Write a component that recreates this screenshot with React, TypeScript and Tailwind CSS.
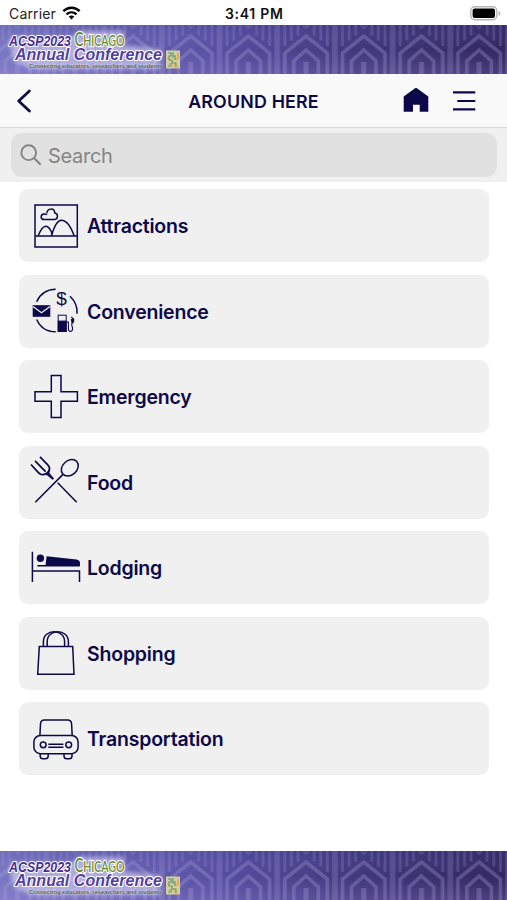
import React from 'react';

const NAVY = '#0c0849';

const Banner: React.FC<{ id: string }> = ({ id }) => (
    <svg className="block w-full h-[49px] shrink-0" viewBox="0 0 507 49" preserveAspectRatio="none">
        <defs>
            <linearGradient id={`${id}-base`}>
                <stop offset="0" stopColor="#7977c2" />
                <stop offset="0.3" stopColor="#625cae" />
                <stop offset="0.48" stopColor="#514a9a" />
                <stop offset="0.7" stopColor="#41387c" />
                <stop offset="1" stopColor="#32275f" />
            </linearGradient>
            <linearGradient id={`${id}-glow`} x1="0" y1="0" x2="0" y2="1">
                <stop offset="0" stopColor="#3c3a90" stopOpacity="0.18" />
                <stop offset="0.5" stopColor="#8f7fd0" stopOpacity="0" />
                <stop offset="1" stopColor="#b49be8" stopOpacity="0.2" />
            </linearGradient>
            <pattern id={`${id}-deco`} width="57.7" height="49" x="-11.3" patternUnits="userSpaceOnUse">
                <g fill="none" stroke="#a9a1dc" strokeOpacity="0.32" strokeWidth="3.6">
                    <path d="M7.6 49V28L28.85 11L50.1 28V49" />
                    <path d="M16.6 49V36L28.85 25L41.1 36V49" />
                    <path d="M28.85 37V49" strokeWidth="5" />
                    <g strokeWidth="2.8" strokeOpacity="0.24">
                        <path d="M1.4 0V49M56.3 0V49" />
                        <path d="M7.6 0V21M14.2 0V15.5M20.8 0V10.5M36.9 0V10.5M43.5 0V15.5M50.1 0V21" />
                        <path d="M26 0L28.85 3L31.7 0" strokeWidth="2" />
                    </g>
                </g>
            </pattern>
            <filter id={`${id}-soft`} x="-10%" y="-30%" width="120%" height="160%">
                <feGaussianBlur stdDeviation="2" />
            </filter>
        </defs>
        <rect width="507" height="49" fill={`url(#${id}-base)`} />
        <rect width="507" height="49" fill={`url(#${id}-deco)`} />
        <rect width="507" height="49" fill={`url(#${id}-glow)`} />

        {/* light halo behind the wordmark */}
        <path
            d="M10 12H72L78 6H124V20L160 24V44H30L14 36L10 22Z"
            fill="#d9d5f5"
            fillOpacity="0.6"
            filter={`url(#${id}-soft)`}
        />
        <g fontFamily='"Liberation Sans", Arial, sans-serif' stroke="#fff" strokeLinejoin="round" paintOrder="stroke">
            <text x="9" y="20.5" fontSize="14" fontWeight="700" fontStyle="italic" fill="#4a2d92" strokeWidth="2" textLength="62" lengthAdjust="spacingAndGlyphs">ACSP2023</text>
            <text x="15" y="35" fontSize="16" fontWeight="700" fontStyle="italic" fill="#5240a0" strokeWidth="2.2" textLength="147" lengthAdjust="spacing">Annual Conference</text>
            <text x="29" y="43" fontSize="6" fontWeight="700" fill="#56683a" strokeWidth="0.8" strokeOpacity="0.4" textLength="133" lengthAdjust="spacingAndGlyphs">Connecting educators, researchers and students</text>
        </g>
        <text x="74.5" y="20.5" fontFamily="Lato, sans-serif" fontSize="16" fontWeight="500" fill="#66842a" stroke="#fff" strokeWidth="2.4" strokeLinejoin="round" paintOrder="stroke" textLength="50" lengthAdjust="spacingAndGlyphs">
            <tspan fontSize="20">C</tspan>HICAGO
        </text>

        {/* small mosaic emblem */}
        <rect x="166" y="25.5" width="14" height="18" fill="#d6cf9c" />
        <g fill="none" strokeWidth="1.2">
            <path d="M168 28h3v3h-2v4h3v4h-3M173 27v4h3M168 41h4" stroke="#4f9a80" />
            <path d="M174 34h4v-6M175 37v5h3M177 31h2M167 33h2" stroke="#e79a3c" />
            <path d="M172 32h3v3M173 38h3v3" stroke="#62a06e" />
        </g>
    </svg>
);

const StatusBar: React.FC = () => (
    <div className="relative flex h-[25px] items-center justify-between bg-white pl-[9px] pr-[6px] text-black">
        <div className="flex items-center gap-[6px]">
            <span className="text-[14px] leading-none tracking-[0.15px] text-[#222] pt-[3px]">Carrier</span>
            <svg className="mt-[1px]" width="19" height="14" viewBox="0 0 19 14" fill="none" stroke="#000">
                <path d="M1.4 5.2C6 .6 13 .6 17.6 5.2" strokeWidth="2.5" />
                <path d="M4.5 8.4C7.4 5.7 11.6 5.7 14.5 8.4" strokeWidth="2.4" />
                <path d="M9.5 13.6L6.7 10.6C8.3 9.2 10.7 9.2 12.3 10.6Z" fill="#000" stroke="none" />
            </svg>
        </div>
        <span className="absolute left-[225px] top-[7px] text-[14px] font-semibold leading-[14px] tracking-[0.7px] text-[#111] whitespace-nowrap">3:41 PM</span>
        <svg className="mt-[1px]" width="31" height="15" viewBox="0 0 31 15">
            <rect x="0.8" y="0.8" width="26" height="13" rx="4" fill="#fff" stroke="#b5b5b5" strokeWidth="1.4" />
            <rect x="2.6" y="2.6" width="22.4" height="9.4" rx="2" fill="#000" />
            <path d="M28.6 5v5c2.2-.8 2.2-4.2 0-5Z" fill="#aaa" />
        </svg>
    </div>
);

const Header: React.FC = () => (
    <header className="grid h-[54px] grid-cols-[1fr_auto_1fr] items-center border-b border-[#dadada] bg-[#f9f9f9] px-[16px]">
        <svg width="16" height="24" viewBox="0 0 16 24" fill="none" stroke={NAVY} strokeWidth="2.7" strokeLinecap="round" strokeLinejoin="round">
            <path d="M13.4 1.9L2.7 12L13.4 22.1" />
        </svg>
        <h1 className="pt-[3px] text-[17.8px] font-semibold tracking-[0.2px] text-[#0c0849] whitespace-nowrap">AROUND HERE</h1>
        <div className="flex items-center justify-end gap-[23px] pr-[15px]">
            <svg width="26" height="26" viewBox="0 0 26 26" fill={NAVY}>
                <path d="M13 -.4L25.3 8.4V23.8H16.7V16.8H10V23.8H.7V8.4Z" />
            </svg>
            <svg width="24" height="22" viewBox="0 0 24 22" stroke={NAVY} strokeWidth="2.2">
                <path d="M1 2.4H23.3M5.3 11H23.3M1 19.4H23.3" />
            </svg>
        </div>
    </header>
);

const SearchBar: React.FC = () => (
    <div className="h-[54px] bg-[#f0f0f0] pt-[5px] pl-[11px] pr-[10px]">
        <div className="flex h-[44px] items-center rounded-[11px] bg-[#e1e1e1] pl-[9px] text-[#858585]">
            <svg width="22" height="22" viewBox="0 0 22 22" fill="none" stroke="currentColor" strokeWidth="1.9" strokeLinecap="round">
                <circle cx="8.7" cy="8.7" r="7.4" />
                <path d="M14.2 14.2L20 20" strokeWidth="2.2" />
            </svg>
            <span className="ml-[6px] pt-[2px] text-[20px] leading-none tracking-[-0.3px]">Search</span>
        </div>
    </div>
);

const categories: { label: string; icon: React.ReactNode }[] = [
    {
        label: 'Attractions',
        icon: (
            <>
                <rect x="6" y="6" width="42.3" height="42" />
                <path d="M6 37H48.3" />
                <path d="M9 37C11.5 31 13.8 27.2 16.8 27.2C19.8 27.2 21.6 30.4 23.4 35.2" />
                <path d="M22.4 37C25 28 28 21.2 32.3 21.2C37.6 21.2 42 28 45.2 37" />
                <path d="M15.2 20.6C11.2 20.6 11 15.2 15.2 14.9C16.5 14.8 17.4 15.2 18 15.8M17.8 14.2C18.4 9 25.4 8.6 25.8 14C29.6 14.6 29.2 20.6 25.4 20.6H15.2" />
            </>
        ),
    },
    {
        label: 'Convenience',
        icon: (
            <>
                <path d="M7.7 17.8C11 10 18 5.4 26.7 5.2M41 12.2C46 17 48.6 23 48 29.8M7.7 35.5C11 43 18 47.8 26.7 47.8" />
                <rect x="3.7" y="21.2" width="17.6" height="11.6" fill={NAVY} stroke="none" />
                <path d="M4 22.4L12.5 28.8L21 22.4" stroke="#f0f0f0" strokeWidth="1.3" />
                <text x="32.6" y="20.6" fontFamily='"Liberation Sans", Arial, sans-serif' fontSize="19" textAnchor="middle" fill={NAVY} stroke="none">$</text>
                <rect x="29.2" y="31.2" width="8" height="16" strokeWidth="1" />
                <rect x="28.7" y="36.6" width="9" height="11.4" fill={NAVY} stroke="none" />
                <path d="M37.5 38H39.4V44.6C39.4 48.4 43.6 48.4 43.6 44.6C43.6 42.6 42 41.4 43 39.4L44.6 37.4V35L42.2 32.8" strokeWidth="1.1" />
                <path d="M41.8 35L44.8 34.8V38.4L42.6 39.4Z" fill={NAVY} stroke="none" />
            </>
        ),
    },
    {
        label: 'Emergency',
        icon: <path d="M22.3 5.6H32V21.8H48.4V31.3H32V47.6H22.3V31.3H6V21.8H22.3Z" />,
    },
    {
        label: 'Food',
        icon: (
            <>
                <ellipse cx="40.8" cy="12.8" rx="9.4" ry="7.2" transform="rotate(-42 40.8 12.8)" />
                <path d="M34 19.4L6.3 47.2M28.7 27.8L47.7 47.2" />
                <path d="M2 9.5L9.4 17.6C11.8 20.2 15.4 20.4 18 18.2C21 15.8 21.4 12.8 19 10.2L11 1.8M6 5.8L16.6 16.6" strokeWidth="1.7" />
                <path d="M14 19.2C16.6 19.4 19.6 17 20.4 13.8L20 18L24.6 23.6L23.6 24.4L18 19.8Z" fill={NAVY} strokeWidth="0.8" />
            </>
        ),
    },
    {
        label: 'Lodging',
        icon: (
            <>
                <path d="M3.4 10.7V41M3.4 30H50.5V41M8.3 24.7H50.8" />
                <circle cx="11.4" cy="17.3" r="3.7" fill={NAVY} stroke="none" />
                <path d="M17.6 15.2L47.5 18.4Q51 19 51 22V24.7H16.5Z" fill={NAVY} stroke="none" />
            </>
        ),
    },
    {
        label: 'Shopping',
        icon: (
            <>
                <path d="M10.3 20.5H43.7L45 48.3H8.7Z" />
                <path d="M14.4 20.5V15.5C14.4 2.6 35.6 2.6 35.6 15.5V20.5" />
                <path d="M18.2 20.5V15.5C18.2 2.6 39.4 2.6 39.4 15.5V20.5" />
            </>
        ),
    },
    {
        label: 'Transportation',
        icon: (
            <>
                <path d="M10.9 23.5L11.5 12Q11.7 8.1 15.5 8.1H38.6Q42.4 8.1 42.6 12L43.2 23.5" />
                <rect x="4.9" y="23.5" width="44.2" height="18.2" rx="6.5" />
                <circle cx="14.2" cy="32.8" r="2.9" />
                <circle cx="39.7" cy="32.8" r="2.9" />
                <path d="M19.3 32.3H34.4M19.3 35.2H34.4" />
                <path d="M11.2 41.7V44Q11.2 46.8 14 46.8H16.4Q19.2 46.8 19.2 44V41.7M35 41.7V44Q35 46.8 37.8 46.8H40.2Q43 46.8 43 44V41.7" />
            </>
        ),
    },
];

const CategoryRow: React.FC<{ label: string; icon: React.ReactNode }> = ({ label, icon }) => (
    <li className="flex h-[73px] items-center rounded-[9px] bg-[#f0f0f0] pl-[10px]">
        <svg className="shrink-0" width="54" height="54" viewBox="0 0 54 54" fill="none" stroke={NAVY} strokeWidth="1.5">
            {icon}
        </svg>
        <span className="ml-[4px] pt-[2px] text-[19.5px] font-semibold leading-none tracking-[-0.2px] text-[#0c0849]">{label}</span>
    </li>
);

const App: React.FC = () => (
    <div className="flex h-[900px] w-[507px] flex-col overflow-hidden bg-white font-[Inter,'Liberation_Sans',sans-serif]">
        <StatusBar />
        <Banner id="top" />
        <Header />
        <SearchBar />
        <ul className="flex grow flex-col gap-[12.5px] pt-[7.4px] pl-[19px] pr-[18.5px]">
            {categories.map((c) => (
                <CategoryRow key={c.label} label={c.label} icon={c.icon} />
            ))}
        </ul>
        <Banner id="bottom" />
    </div>
);

export default App;
